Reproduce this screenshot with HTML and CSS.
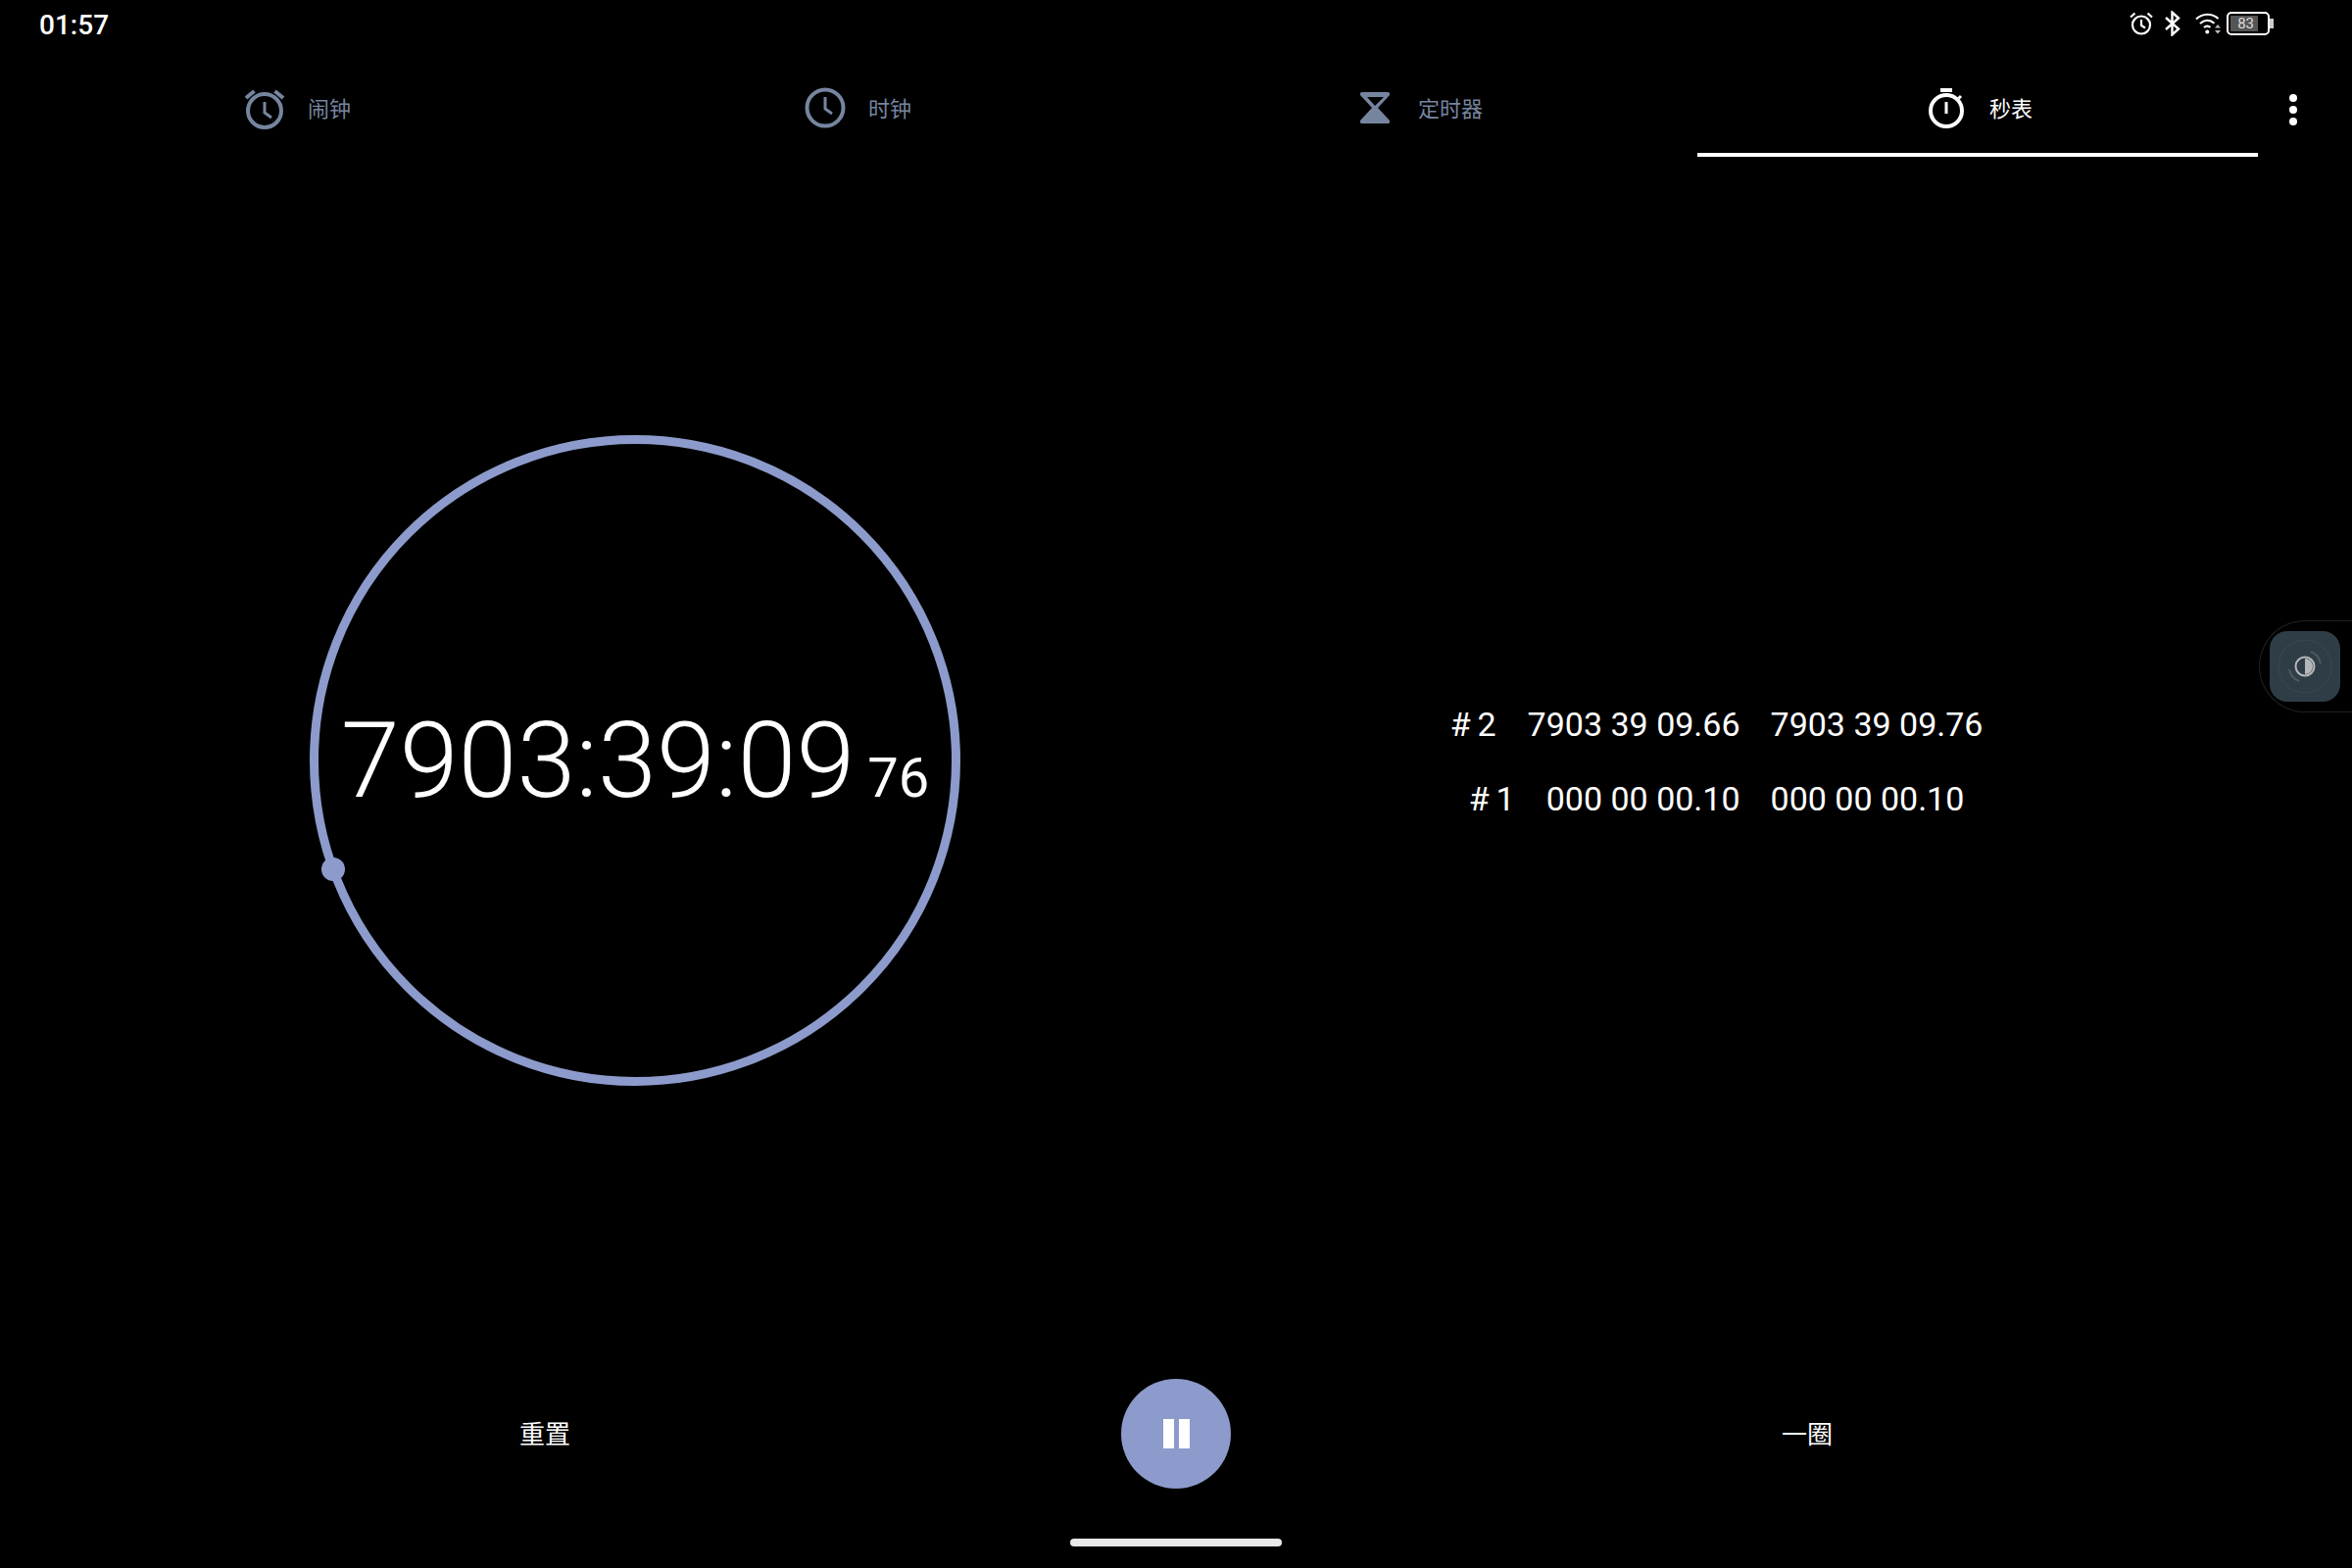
FILE: index.html
```html
<!DOCTYPE html>
<html lang="zh-CN">
<head>
    <meta charset="utf-8">
    <title>秒表</title>
    <link rel="stylesheet" href="styles.css">
</head>
<body>
    <div class="status-bar">
        <span class="status-time">01:57</span>
        <div class="status-icons">
            <svg class="icon-alarm-small" width="26" height="24" viewBox="0 0 26 24" fill="none" stroke="#fff" stroke-width="2.2">
                <circle cx="13" cy="13.5" r="9"/>
                <path d="M13 8v6l4 2.500M2 5.500 6.500 1.500M24 5.500 19.500 1.500"/>
            </svg>
            <svg class="icon-bluetooth" width="18" height="26" viewBox="0 0 18 26" fill="none" stroke="#fff" stroke-width="2.4">
                <path d="M2 7 15 18.500 8.500 24.500V1.500L15 7.500 2 19"/>
            </svg>
            <svg class="icon-wifi" width="28" height="24" viewBox="0 0 28 24" fill="none" stroke="#fff" stroke-width="2.2">
                <path d="M1 7.500C7 1.500 17 1 23.500 7M5 12C9.500 7.800 15 7.800 19.500 11.800M9 16C11 14.200 13.500 14.200 15.500 15.800"/>
                <circle cx="12.300" cy="20.500" r="2" fill="#fff" stroke="none"/>
                <path d="M20 16.500 23 13 26 16.500ZM20 19 23 22.500 26 19Z" fill="#bbb" stroke="none"/>
            </svg>
            <div class="battery">
                <div class="battery-body"><span class="battery-level">83</span></div>
                <div class="battery-nub"></div>
            </div>
        </div>
    </div>

    <nav class="tabs">
        <div class="tab">
            <svg class="tab-icon" viewBox="0 0 48 48" fill="none" stroke="currentColor" stroke-width="4">
                <circle cx="24" cy="27" r="17"/>
                <path d="M24 18v11l7 5" stroke-width="3"/>
                <path d="M5 14 13.500 7M43 14 34.500 7"/>
            </svg>
            <span>闹钟</span>
        </div>
        <div class="tab">
            <svg class="tab-icon" viewBox="0 0 48 48" fill="none" stroke="currentColor" stroke-width="4">
                <circle cx="24" cy="24" r="18.500"/>
                <path d="M24 13v12l7 5" stroke-width="3"/>
            </svg>
            <span>时钟</span>
        </div>
        <div class="tab">
            <svg class="tab-icon" viewBox="0 0 48 48" fill="currentColor">
                <path d="M9 9.500A1.500 1.500 0 0 1 10.500 8H37.500A1.500 1.500 0 0 1 39 9.500V11L27 24 39 37V38.500A1.500 1.500 0 0 1 37.500 40H10.500A1.500 1.500 0 0 1 9 38.500V37L21 24 9 11ZM16 13 24 22 33 13Z" fill-rule="evenodd"/>
            </svg>
            <span>定时器</span>
        </div>
        <div class="tab active">
            <svg class="tab-icon" viewBox="0 0 48 48" fill="none" stroke="currentColor" stroke-width="4">
                <circle cx="24" cy="27" r="16"/>
                <path d="M18 6h12"/>
                <path d="M24 18v12M36 15l3-3" stroke-width="3"/>
            </svg>
            <span>秒表</span>
        </div>
        <div class="more">
            <i></i><i></i><i></i>
        </div>
    </nav>

    <main class="content">
        <section class="timer-col">
            <div class="ring">
                <div class="ring-dot"></div>
                <div class="timer-text">
                    <span class="timer-main">7903:39:09</span>
                    <span class="timer-hundredths">76</span>
                </div>
            </div>
        </section>
        <section class="laps">
            <div class="lap-row">
                <div class="lap-left"><span>#&#8201;2</span><span>7903 39 09.66</span></div>
                <span>7903 39 09.76</span>
            </div>
            <div class="lap-row">
                <div class="lap-left"><span>#&#8201;1</span><span>000 00 00.10</span></div>
                <span>000 00 00.10</span>
            </div>
        </section>
    </main>

    <footer class="controls">
        <span class="control-label">重置</span>
        <div class="pause-btn"><i></i><i></i></div>
        <span class="control-label">一圈</span>
    </footer>
    <div class="home-area"><div class="home-bar"></div></div>

    <div class="side-pill">
        <div class="side-button">
            <svg width="72" height="72" viewBox="0 0 72 72" fill="none">
                <circle cx="36" cy="36" r="27" stroke="#3a4950" stroke-width="1"/>
                <path d="M42 21A16 16 0 0 1 52 33M30 51A16 16 0 0 1 20 39" stroke="#4b5a61" stroke-width="2"/>
                <circle cx="36" cy="36" r="9.500" stroke="#b5b8ba" stroke-width="2"/>
                <path d="M36 28a8 8 0 0 1 0 16Z" fill="#b5b8ba"/>
            </svg>
        </div>
    </div>
</body>
</html>
```

FILE: styles.css
```css
* {
  box-sizing: border-box;
}

body {
  margin: 0;
  width: 2400px;
  height: 1600px;
  overflow: hidden;
  position: relative;
  background-color: #000;
  color: #fff;
  font-family: Roboto, "Noto Sans CJK SC", sans-serif;
  display: flex;
  flex-direction: column;
}

.status-bar {
  height: 60px;
  padding: 8px 80px 0 40px;
  display: flex;
  justify-content: space-between;
  align-items: flex-start;
}

.status-time {
  font-size: 28px;
  font-weight: 500;
  line-height: 34px;
  padding-top: 1px;
}

.status-icons {
  display: flex;
  align-items: center;
  height: 32px;
  padding-top: 0;
}

.icon-bluetooth {
  margin: 0 14px 0 10px;
}

.battery {
  display: flex;
  align-items: center;
  margin-left: 4px;
}

.battery-body {
  width: 44px;
  height: 24px;
  border: 2px solid #fff;
  border-radius: 5px;
  padding: 2px 10px 2px 2px;
  display: flex;
}

.battery-level {
  flex: 1;
  background-color: #555;
  color: #ddd;
  font-size: 15px;
  line-height: 16px;
  text-align: right;
  padding-right: 4px;
}

.battery-nub {
  width: 4px;
  height: 10px;
  background-color: #ccc;
}

.tabs {
  height: 100px;
  padding-left: 16px;
  display: flex;
}

.tab {
  width: 572px;
  display: flex;
  align-items: center;
  justify-content: center;
  gap: 20px;
  color: #76859f;
  font-size: 22px;
  border-bottom: 4px solid transparent;
  padding-top: 4px;
}

.tab span {
  padding-bottom: 3px;
}

.tab.active {
  color: #fff;
  border-bottom-color: #fff;
}

.tab-icon {
  width: 48px;
  height: 48px;
}

.more {
  margin-left: 32px;
  width: 8px;
  height: 32px;
  margin-top: 36px;
  display: flex;
  flex-direction: column;
  justify-content: space-between;
}

.more i {
  width: 8px;
  height: 8px;
  border-radius: 50%;
  background-color: #fff;
}

.content {
  height: 1231px;
  display: grid;
  grid-template-columns: 1296px 912px;
  align-items: center;
  justify-items: center;
}

.ring {
  width: 664px;
  height: 664px;
  border: 9px solid #8c9bcb;
  border-radius: 50%;
  position: relative;
  display: flex;
  align-items: center;
  justify-content: center;
}

.ring-dot {
  position: absolute;
  left: 3px;
  top: 422px;
  width: 24px;
  height: 24px;
  border-radius: 50%;
  background-color: #8c9bcb;
}

.timer-text {
  display: flex;
  align-items: baseline;
  gap: 13px;
  font-weight: 300;
  white-space: nowrap;
}

.timer-main {
  font-size: 108px;
}

.timer-hundredths {
  font-size: 56px;
  font-weight: 400;
}

.laps {
  display: flex;
  flex-direction: column;
  gap: 36px;
  font-size: 34px;
  line-height: 40px;
  padding-top: 2px;
}

.lap-row {
  display: flex;
  gap: 31px;
  white-space: nowrap;
}

.lap-left {
  width: 295px;
  display: flex;
  justify-content: flex-end;
  gap: 32px;
}

.controls {
  height: 144px;
  display: flex;
  align-items: center;
  justify-content: center;
  gap: 538px;
}

.control-label {
  width: 100px;
  font-size: 26px;
  text-align: center;
  padding-bottom: 3px;
}

.pause-btn {
  width: 112px;
  height: 112px;
  border-radius: 50%;
  background-color: #8c9bcb;
  display: flex;
  align-items: center;
  justify-content: center;
  gap: 5px;
}

.pause-btn i {
  width: 11px;
  height: 30px;
  background-color: #fff;
}

.home-area {
  flex: 1;
  display: flex;
  justify-content: center;
  padding-top: 35px;
}

.home-bar {
  width: 216px;
  height: 8px;
  border-radius: 4px;
  background-color: #e8e8e8;
}

.side-pill {
  position: absolute;
  top: 633px;
  right: 0;
  width: 95px;
  height: 94px;
  border: 1px solid #222;
  border-right: none;
  border-radius: 47px 0 0 47px;
  padding: 10px 0 0 10px;
}

.side-button {
  width: 72px;
  height: 72px;
  border-radius: 18px;
  background-color: #2f3e46;
}
```
